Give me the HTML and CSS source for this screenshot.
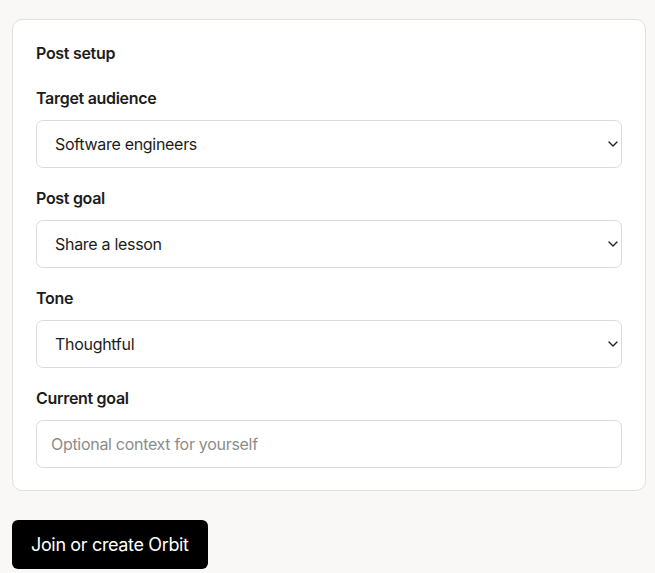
FILE: index.html
```html
<!DOCTYPE html>
<html lang="en">
<head>
<meta charset="utf-8">
<title>Post setup</title>
<link rel="stylesheet" href="styles.css">
</head>
<body>
<main class="page">
  <section class="card">
    <h2 class="card-title">Post setup</h2>
    <div class="field">
      <label class="label" for="aud">Target audience</label>
      <div class="select-wrap">
        <select id="aud" class="control select"><option>Software engineers</option></select>
        <svg class="chev" width="10" height="6" viewBox="0 0 10 6"><path d="M1 1l4 4 4-4" fill="none" stroke="#222" stroke-width="1.4" stroke-linecap="round" stroke-linejoin="round"/></svg>
      </div>
    </div>
    <div class="field">
      <label class="label" for="goal">Post goal</label>
      <div class="select-wrap">
        <select id="goal" class="control select"><option>Share a lesson</option></select>
        <svg class="chev" width="10" height="6" viewBox="0 0 10 6"><path d="M1 1l4 4 4-4" fill="none" stroke="#222" stroke-width="1.4" stroke-linecap="round" stroke-linejoin="round"/></svg>
      </div>
    </div>
    <div class="field">
      <label class="label" for="tone">Tone</label>
      <div class="select-wrap">
        <select id="tone" class="control select"><option>Thoughtful</option></select>
        <svg class="chev" width="10" height="6" viewBox="0 0 10 6"><path d="M1 1l4 4 4-4" fill="none" stroke="#222" stroke-width="1.4" stroke-linecap="round" stroke-linejoin="round"/></svg>
      </div>
    </div>
    <div class="field">
      <label class="label" for="cur">Current goal</label>
      <input id="cur" class="control input" type="text" placeholder="Optional context for yourself">
    </div>
  </section>
  <button class="btn" type="button">Join or create Orbit</button>
</main>
</body>
</html>
```
FILE: styles.css
```css
* { box-sizing: border-box; }
html, body { margin: 0; padding: 0; }
body {
  background: #f9f8f6;
  font-family: Inter, "Noto Sans", "Liberation Sans", sans-serif;
  color: #1c1c1c;
  letter-spacing: -0.3px;
}
.page {
  padding: 19px 10px 0 12px;
  display: flex;
  flex-direction: column;
  align-items: flex-start;
}
.card {
  width: 634px;
  background: #fff;
  border: 1px solid #e1e0de;
  border-radius: 10px;
  padding: 23px 23px 22px;
  display: flex;
  flex-direction: column;
  gap: 20px;
}
.card-title {
  margin: 0 0 5px;
  font-size: 16px;
  line-height: 20px;
  font-weight: 600;
}
.field {
  display: flex;
  flex-direction: column;
  gap: 12px;
}
.label {
  font-size: 16px;
  line-height: 20px;
  font-weight: 600;
}
.select-wrap { position: relative; }
.control {
  width: 100%;
  height: 48px;
  border: 1px solid #dcdbd9;
  border-radius: 7px;
  background: #fff;
  font-family: inherit;
  font-size: 16px;
  letter-spacing: -0.3px;
  color: #1c1c1c;
  outline: none;
  margin: 0;
}
.select {
  appearance: none;
  -webkit-appearance: none;
  padding: 0 36px 0 18px;
}
.input { padding: 0 14px; }
.input::placeholder { color: #8c8c8c; }
.chev {
  position: absolute;
  right: 4px;
  top: 21px;
}
.btn {
  margin-top: 29px;
  height: 49px;
  padding: 0 19px;
  background: #000;
  color: #fff;
  border: none;
  border-radius: 6px;
  font-family: inherit;
  font-size: 18px;
  letter-spacing: -0.35px;
}
```
